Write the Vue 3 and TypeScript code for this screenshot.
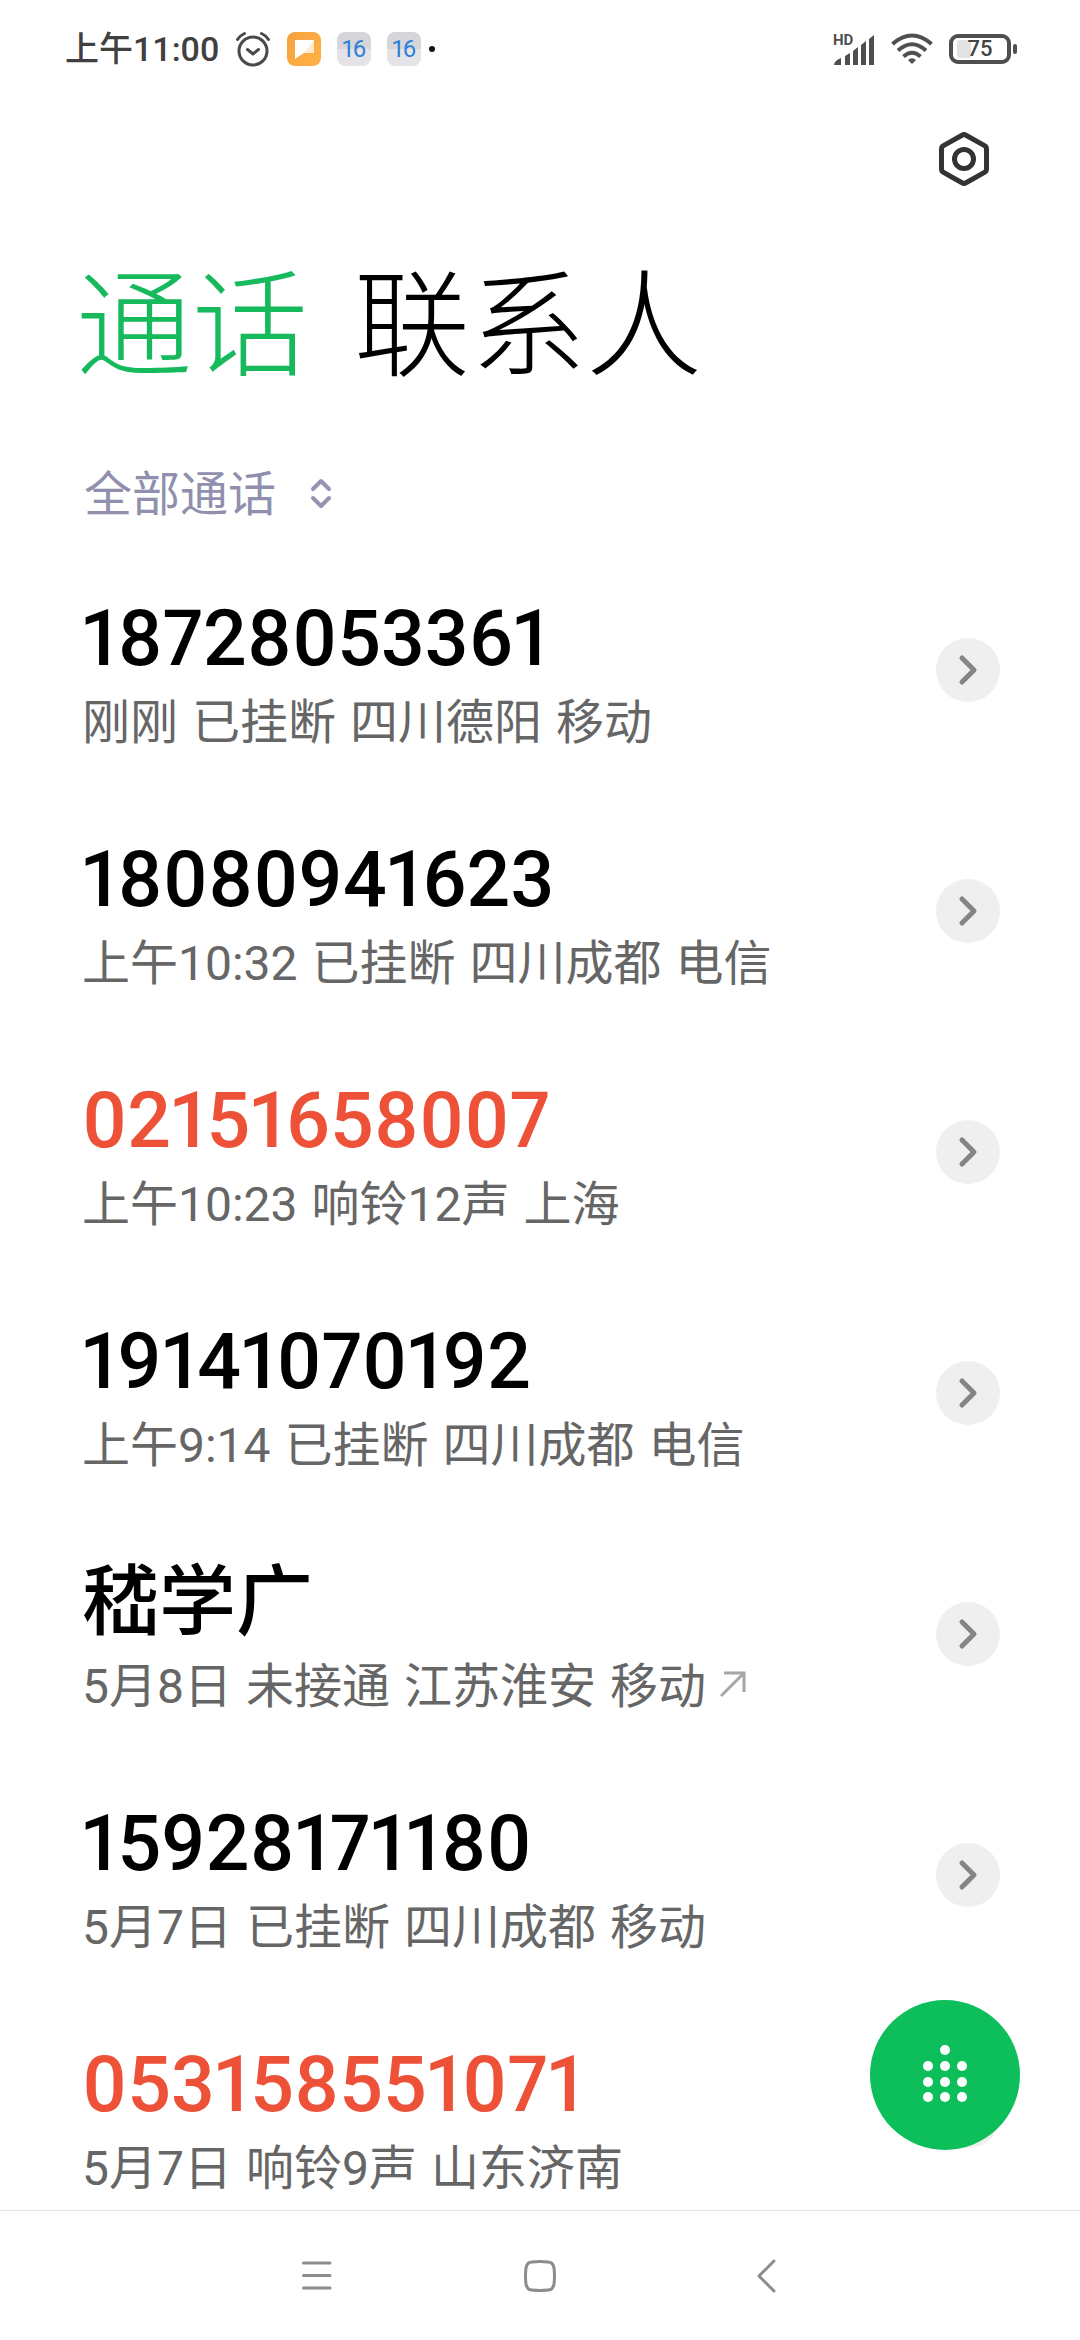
<script setup lang="ts">
import { ref } from 'vue'

interface CallRecord {
  id: number
  title: string
  detail: string[]
  missed?: boolean
  outgoing?: boolean
}

const tabs: string[] = ['通话', '联系人']
const activeTab = ref<string>('通话')

const filters: string[] = ['全部通话', '未接来电']
const activeFilter = ref<string>('全部通话')

const calls: CallRecord[] = [
  { id: 1, title: '18728053361', detail: ['刚刚', '已挂断', '四川德阳', '移动'] },
  { id: 2, title: '18080941623', detail: ['上午10:32', '已挂断', '四川成都', '电信'] },
  { id: 3, title: '02151658007', detail: ['上午10:23', '响铃12声', '上海'], missed: true },
  { id: 4, title: '19141070192', detail: ['上午9:14', '已挂断', '四川成都', '电信'] },
  { id: 5, title: '嵇学广', detail: ['5月8日', '未接通', '江苏淮安', '移动'], outgoing: true },
  { id: 6, title: '15928171180', detail: ['5月7日', '已挂断', '四川成都', '移动'] },
  { id: 7, title: '053158551071', detail: ['5月7日', '响铃9声', '山东济南'], missed: true },
]

const keypadDots: [number, number][] = [
  [22, 5],
  [5, 21], [22, 21], [39, 21],
  [5, 37], [22, 37], [39, 37],
  [5, 52], [22, 52], [39, 52],
]
</script>

<template>
  <div class="page">
    <header class="status">
      <div class="status-group">
        <span class="clock">上午11:00</span>
        <svg class="alarm" width="36" height="36" viewBox="0 0 36 36" fill="none" stroke="#4a4a4a" stroke-width="3" stroke-linecap="round" stroke-linejoin="round">
          <circle cx="18" cy="20" r="14" />
          <path d="M12.500 18.500l5.500 4.500 5.500-4.500" />
          <path d="M2.500 8.500Q5 4.500 9.500 2.500M33.500 8.500Q31 4.500 26.500 2.500" />
        </svg>
        <svg width="34" height="34" viewBox="0 0 34 34">
          <defs>
            <linearGradient id="note" x1="0" y1="0" x2="1" y2="1">
              <stop offset="0" stop-color="#f5a03c" />
              <stop offset="1" stop-color="#ffb347" />
            </linearGradient>
          </defs>
          <rect width="34" height="34" rx="8" fill="url(#note)" />
          <path d="M8 8H27V21H17L8 27Z" fill="#fff" />
          <path d="M17 21L27 8V21Z" fill="#ffe9cf" />
        </svg>
        <span class="date-badge">16</span>
        <span class="date-badge">16</span>
        <span class="more-dot"></span>
      </div>
      <div class="status-group">
        <svg class="signal" width="42" height="36" viewBox="0 -4 42 36" fill="#4f4f4f">
          <text x="0" y="10" font-size="15" font-weight="700">HD</text>
          <path d="M1 30Q1 26 8 23V30Z" />
          <path d="M12 21L17 18V30H12Z" />
          <path d="M20 16L25 12V30H20Z" />
          <path d="M28 10L33 6V30H28Z" />
          <path d="M36 4L41 0V30H36Z" />
        </svg>
        <svg class="wifi" width="42" height="32" viewBox="0 0 42 32" fill="none" stroke="#4f4f4f" stroke-width="4">
          <path d="M1.500 11Q21-6 40.500 11" />
          <path d="M7 17.500Q21 5 35 17.500" />
          <path d="M12.500 23.500Q21 16 29.500 23.500" />
          <path d="M17 27Q21 23.500 25 27L21 31Z" fill="#4f4f4f" stroke="none" />
        </svg>
        <span class="battery">75</span>
        <span class="battery-tip"></span>
      </div>
    </header>

    <div class="toolbar">
      <button class="icon-button" type="button" aria-label="设置">
        <svg width="54" height="58" viewBox="0 0 54 58" fill="none" stroke="#333" stroke-width="5" stroke-linejoin="round">
          <path d="M25 5.200Q27 4 29 5.200L47.500 15.600Q49.500 16.800 49.500 19V39Q49.500 41.200 47.500 42.400L29 52.800Q27 54 25 52.800L6.500 42.400Q4.500 41.200 4.500 39V19Q4.500 16.800 6.500 15.600Z" />
          <circle cx="27" cy="29" r="9.500" />
        </svg>
      </button>
    </div>

    <nav class="tabs" role="tablist">
      <button
        v-for="tab in tabs"
        :key="tab"
        type="button"
        role="tab"
        class="tab"
        :class="{ active: tab === activeTab }"
        :aria-selected="tab === activeTab"
        @click="activeTab = tab"
      >{{ tab }}</button>
    </nav>

    <label class="filter">
      <select v-model="activeFilter" aria-label="通话筛选">
        <option v-for="item in filters" :key="item" :value="item">{{ item }}</option>
      </select>
      <svg width="24" height="36" viewBox="0 0 24 36" fill="none" stroke="#9494b3" stroke-width="4" stroke-linecap="round" stroke-linejoin="round">
        <path d="M4 12L12 4L20 12M4 21L12 29L20 21" />
      </svg>
    </label>

    <ul class="calls">
      <li v-for="call in calls" :key="call.id" class="call">
        <div class="call-text">
          <div class="call-title" :class="{ missed: call.missed }">{{ call.title }}</div>
          <div class="call-detail">
            <span v-for="part in call.detail" :key="part">{{ part }}</span>
            <svg v-if="call.outgoing" width="28" height="36" viewBox="0 0 28 36" fill="none" stroke="#a6a6a6" stroke-width="3">
              <path d="M1 27L24 4M4 4H24V23" />
            </svg>
          </div>
        </div>
        <button class="info" type="button" aria-label="详情">
          <svg width="20" height="32" viewBox="0 0 20 32" fill="none" stroke="#858585" stroke-width="5" stroke-linecap="round" stroke-linejoin="round">
            <path d="M4 4L16 16L4 28" />
          </svg>
        </button>
      </li>
    </ul>

    <button class="dial" type="button" aria-label="拨号键盘">
      <svg width="44" height="60" viewBox="0 0 44 60" fill="#fff">
        <circle v-for="([x, y], i) in keypadDots" :key="i" :cx="x" :cy="y" r="5" />
      </svg>
    </button>

    <footer class="system-nav">
      <button type="button" aria-label="最近任务">
        <svg width="36" height="36" viewBox="0 0 36 36" fill="none" stroke="#8c8c8c" stroke-width="3" stroke-linecap="round">
          <path d="M7.500 5H34M7.500 17.500H34M7.500 30H34" />
        </svg>
      </button>
      <button type="button" aria-label="主屏幕">
        <svg width="36" height="36" viewBox="0 0 36 36" fill="none" stroke="#8c8c8c" stroke-width="3">
          <path d="M10 4Q18 3 26 4Q31 4 32 10Q33 18 32 26Q31 32 26 32Q18 33 10 32Q5 32 4 26Q3 18 4 10Q5 4 10 4Z" />
        </svg>
      </button>
      <button type="button" aria-label="返回">
        <svg width="36" height="36" viewBox="0 0 36 36" fill="none" stroke="#8c8c8c" stroke-width="3" stroke-linecap="round" stroke-linejoin="round">
          <path d="M26 3L11 18L26 33" />
        </svg>
      </button>
    </footer>
  </div>
</template>

<style>
body {
  background: #fff;
}
</style>

<style scoped>
.page {
  position: relative;
  display: flex;
  flex-direction: column;
  height: 100vh;
  overflow: hidden;
  background: #fff;
  color: #000;
  font-family: Roboto, "Noto Sans CJK SC", sans-serif;
}

button,
select {
  margin: 0;
  padding: 0;
  border: 0;
  background: none;
  color: inherit;
  font: inherit;
}

svg {
  display: block;
  flex: none;
}

.status {
  display: flex;
  justify-content: space-between;
  align-items: center;
  height: 98px;
  padding: 0 63px 0 65px;
}

.status-group {
  display: flex;
  align-items: center;
  gap: 16px;
}

.clock {
  color: #404040;
  font-size: 34px;
  font-weight: 500;
  line-height: 48px;
}

.date-badge {
  width: 34px;
  border-radius: 8px;
  background: linear-gradient(#d6d6da 50%, #e4e4e6 50%);
  color: #2f80d8;
  font-size: 24px;
  font-variant-numeric: proportional-nums;
  line-height: 34px;
  text-align: center;
}

.more-dot {
  width: 6px;
  height: 6px;
  margin-left: -8px;
  border-radius: 50%;
  background: #111;
}

.battery {
  box-sizing: border-box;
  width: 62px;
  height: 30px;
  border: 4px solid #4f4f4f;
  border-radius: 9px;
  background: linear-gradient(90deg, #e3e3e3 14px, #fff 14px) content-box;
  padding: 2px 4px;
  color: #444;
  font-size: 22px;
  font-weight: 500;
  line-height: 18px;
  text-align: center;
}

.battery-tip {
  width: 4px;
  height: 10px;
  margin-left: -14px;
  border-radius: 2px;
  background: #4f4f4f;
}

.toolbar {
  display: flex;
  justify-content: flex-end;
  padding: 32px 89px 0;
}

.tabs {
  display: flex;
  gap: 46px;
  padding: 64px 76px 0;
}

.tab {
  font-size: 116px;
  font-weight: 300;
  line-height: 150px;
}

.tab.active {
  color: #16b95c;
}

.filter {
  display: flex;
  align-items: center;
  gap: 32px;
  padding: 61px 84px 22px;
  color: #9090ae;
}

.filter select {
  appearance: none;
  font-size: 48px;
  line-height: 64px;
}

.calls {
  flex: 1;
  min-height: 0;
  margin: 0;
  padding: 0;
  overflow: hidden;
  list-style: none;
}

.call {
  display: flex;
  justify-content: space-between;
  align-items: center;
  padding: 0 80px 0 82px;
}

.call-text {
  padding: 39px 0 34px;
}

.call-title {
  font-size: 77px;
  font-weight: 500;
  font-variant-numeric: proportional-nums;
  line-height: 102px;
}

.call-title.missed {
  color: #ed5138;
}

.call-detail {
  display: flex;
  align-items: center;
  gap: 14px;
  color: #666;
  font-size: 48px;
  line-height: 66px;
}

.info {
  display: flex;
  justify-content: center;
  align-items: center;
  width: 64px;
  height: 64px;
  border-radius: 50%;
  background: #efefef;
}

.dial {
  position: absolute;
  right: 60px;
  bottom: 190px;
  display: flex;
  justify-content: center;
  align-items: center;
  width: 150px;
  height: 150px;
  border-radius: 50%;
  background: #0cbf5b;
}

.system-nav {
  display: flex;
  justify-content: center;
  align-items: center;
  gap: 190px;
  height: 129px;
  border-top: 1px solid #e2e2e2;
  background: #fff;
}
</style>
